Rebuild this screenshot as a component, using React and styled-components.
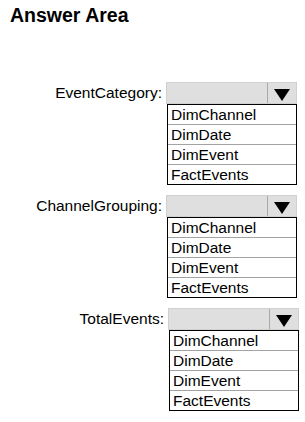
import React from 'react';
import styled, { createGlobalStyle } from 'styled-components';

// ========== STYLED COMPONENTS ==========

const GlobalStyle = createGlobalStyle`
  html, body {
    margin: 0;
    padding: 0;
    background: #ffffff;
  }
  body {
    font-family: "Liberation Sans", Arial, sans-serif;
    color: #000000;
  }
`;

const Page = styled.div`
  width: 305px;
  height: 422px;
  box-sizing: border-box;
  padding: 5px 0 0 10px;
  overflow: hidden;
`;

const Title = styled.h1`
  margin: 0;
  font-size: 19.5px;
  line-height: 20px;
  font-weight: bold;
`;

const Fields = styled.div`
  display: flex;
  flex-direction: column;
  gap: 10px;
  margin-top: 57px;
`;

const Field = styled.div`
  display: grid;
  grid-template-columns: 152px 131px;
  column-gap: 4px;
  align-items: start;
  margin-left: ${props => props.$shift || 0}px;
`;

const Label = styled.div`
  font-size: 15.5px;
  line-height: 22px;
  height: 22px;
  text-align: right;
  white-space: nowrap;
`;

const Dropdown = styled.div`
  display: flex;
  flex-direction: column;
`;

const SelectBox = styled.div`
  height: 22px;
  box-sizing: border-box;
  background: #dfdfdf;
  border: 1px solid #d0d0d0;
  display: flex;
  justify-content: flex-end;
`;

const ArrowCell = styled.div`
  width: 29px;
  border-left: 1px solid #a8a8a8;
  display: flex;
  align-items: center;
  justify-content: center;
  padding-top: 3px;
  box-sizing: border-box;
`;

const OptionList = styled.div`
  width: 130px;
  margin-left: 1px;
  box-sizing: border-box;
  border: 1px solid #000000;
  background: #ffffff;
`;

const OptionItem = styled.div`
  height: 19px;
  line-height: 19px;
  font-size: 15.5px;
  padding-left: 3px;
  border-top: ${props => props.$first ? 'none' : '1px solid #a3a3a3'};
  white-space: nowrap;
`;

// ========== COMPONENT ==========

const options = ['DimChannel', 'DimDate', 'DimEvent', 'FactEvents'];

const fields = [
  { label: 'EventCategory:', shift: 0 },
  { label: 'ChannelGrouping:', shift: 0 },
  { label: 'TotalEvents:', shift: 2 },
];

const Arrow = () => (
  <svg width="16" height="12" viewBox="0 0 16 12">
    <polygon points="0,0 16,0 8,12" fill="#000" />
  </svg>
);

const App = () => (
  <>
    <GlobalStyle />
    <Page>
      <Title>Answer Area</Title>
      <Fields>
        {fields.map(field => (
          <Field key={field.label} $shift={field.shift}>
            <Label>{field.label}</Label>
            <Dropdown>
              <SelectBox>
                <ArrowCell>
                  <Arrow />
                </ArrowCell>
              </SelectBox>
              <OptionList>
                {options.map((opt, i) => (
                  <OptionItem key={opt} $first={i === 0}>{opt}</OptionItem>
                ))}
              </OptionList>
            </Dropdown>
          </Field>
        ))}
      </Fields>
    </Page>
  </>
);

export default App;
